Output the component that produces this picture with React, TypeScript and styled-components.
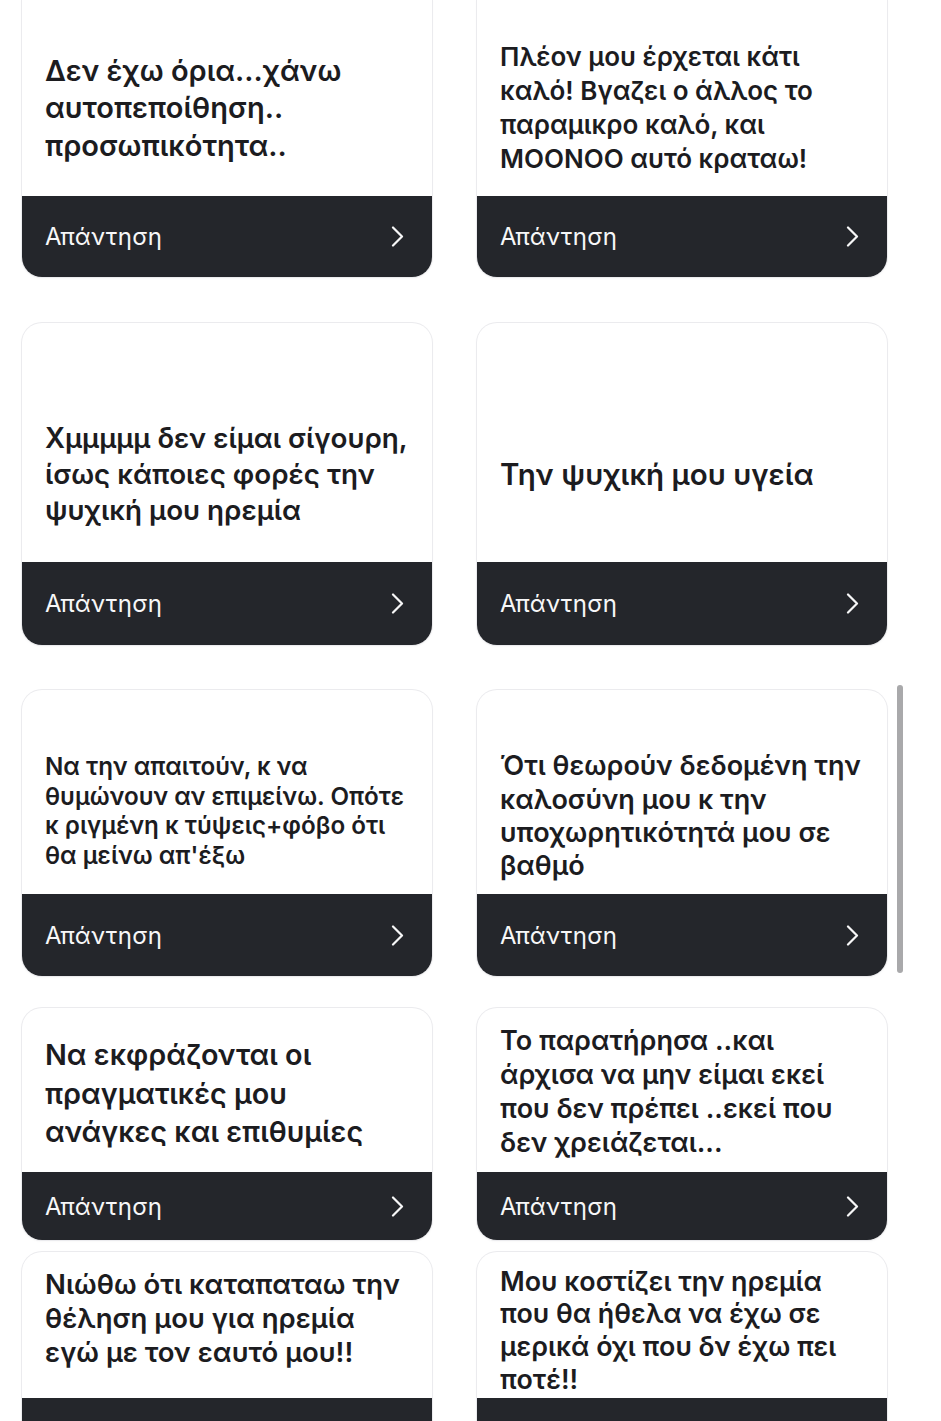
import React from 'react'
import styled, { createGlobalStyle } from 'styled-components'

const GlobalStyle = createGlobalStyle`
  html, body {
    margin: 0;
    padding: 0;
    background: #ffffff;
  }
  body {
    font-family: Inter, "Noto Sans", "Liberation Sans", sans-serif;
    -webkit-font-smoothing: antialiased;
  }
`

const Page = styled.div`
  position: relative;
  height: 1421px;
  overflow: hidden;
  padding: 0 54px 0 22px;
  display: flex;
  flex-direction: column;
`

const Row = styled.div<{ $space: number }>`
  display: grid;
  grid-template-columns: 410px 410px;
  column-gap: 45px;
  margin-bottom: ${(p) => p.$space}px;
`

const Card = styled.div<{ $cutTop?: boolean }>`
  display: flex;
  flex-direction: column;
  background: #ffffff;
  border-radius: ${(p) => (p.$cutTop ? '0 0 20px 20px' : '20px')};
  overflow: hidden;
  box-shadow: 0 0 0 1px #ebebee, 0 1px 3px rgba(0, 0, 0, 0.05);
`

const Body = styled.div<{ $height: number; $padTop: number; $padBottom: number }>`
  box-sizing: border-box;
  height: ${(p) => p.$height}px;
  padding: ${(p) => p.$padTop}px 12px ${(p) => p.$padBottom}px 23px;
  display: flex;
  flex-direction: column;
  justify-content: center;
`

const Text = styled.p<{ $size: number; $line: number }>`
  margin: 0;
  font-size: ${(p) => p.$size}px;
  line-height: ${(p) => p.$line}px;
  font-weight: 600;
  color: #1c1c1f;
  white-space: nowrap;
`

const Footer = styled.div<{ $height: number }>`
  box-sizing: border-box;
  height: ${(p) => p.$height}px;
  flex-shrink: 0;
  background: #24262b;
  display: flex;
  align-items: center;
  justify-content: space-between;
  padding: 0 28px 0 23px;
  color: #f7f7f8;
`

const FooterLabel = styled.span`
  font-size: 24px;
  font-weight: 400;
  letter-spacing: 0.3px;
`

const Chevron = styled.svg`
  width: 13px;
  height: 21px;
  display: block;
`

const Scrollbar = styled.div`
  position: absolute;
  top: 685px;
  left: 897px;
  width: 6px;
  height: 288px;
  border-radius: 3px;
  background: #a9a9ab;
`

type CardData = {
  lines: string[]
  size: number
  line: number
  padTop?: number
  padBottom?: number
}

type RowData = {
  body: number
  padTop: number
  footer: number
  space: number
  cutTop?: boolean
  cards: [CardData, CardData]
}

const rows: RowData[] = [
  {
    body: 196,
    padTop: 20,
    footer: 81,
    space: 46,
    cutTop: true,
    cards: [
      { lines: ['Δεν έχω όρια...χάνω', 'αυτοπεποίθηση..', 'προσωπικότητα..'], size: 29, line: 37.5 },
      {
        lines: ['Πλέον μου έρχεται κάτι', 'καλό! Βγαζει ο άλλος το', 'παραμικρο καλό, και', 'ΜΟΟΝΟΟ αυτό κραταω!'],
        size: 26,
        line: 34,
      },
    ],
  },
  {
    body: 239,
    padTop: 62,
    footer: 83,
    space: 45,
    cards: [
      { lines: ['Χμμμμμ δεν είμαι σίγουρη,', 'ίσως κάποιες φορές την', 'ψυχική μου ηρεμία'], size: 27.8, line: 36 },
      { lines: ['Την ψυχική μου υγεία'], size: 29.5, line: 36 },
    ],
  },
  {
    body: 204,
    padTop: 38,
    footer: 82,
    space: 32,
    cards: [
      {
        lines: ['Να την απαιτούν, κ να', 'θυμώνουν αν επιμείνω. Οπότε', 'κ ριγμένη κ τύψεις+φόβο ότι', 'θα μείνω απ\'έξω'],
        size: 24.2,
        line: 29.5,
      },
      {
        lines: ['Ότι θεωρούν δεδομένη την', 'καλοσύνη μου κ την', 'υποχωρητικότητά μου σε', 'βαθμό'],
        size: 27,
        line: 33.3,
        padTop: 48,
      },
    ],
  },
  {
    body: 164,
    padTop: 0,
    footer: 68,
    space: 12,
    cards: [
      { lines: ['Να εκφράζονται οι', 'πραγματικές μου', 'ανάγκες και επιθυμίες'], size: 28.8, line: 38.5, padTop: 8 },
      {
        lines: ['Το παρατήρησα  ..και', 'άρχισα να μην είμαι εκεί', 'που δεν πρέπει ..εκεί που', 'δεν χρειάζεται...'],
        size: 27,
        line: 34,
        padTop: 3,
      },
    ],
  },
  {
    body: 146,
    padTop: 0,
    footer: 80,
    space: 0,
    cards: [
      { lines: ['Νιώθω ότι καταπαταω την', 'θέληση μου για ηρεμία', 'εγώ με τον εαυτό μου!!'], size: 27.5, line: 34, padBottom: 14 },
      {
        lines: ['Μου κοστίζει την ηρεμία', 'που θα ήθελα να έχω σε', 'μερικά όχι που δν έχω πει', 'ποτέ!!'],
        size: 26.8,
        line: 32.7,
        padTop: 10,
      },
    ],
  },
]

const ChevronIcon: React.FC = () => (
  <Chevron viewBox="0 0 13 21" fill="none">
    <polyline points="2,1.5 11,10.5 2,19.5" stroke="#f7f7f8" strokeWidth="2.2" strokeLinecap="round" strokeLinejoin="round" />
  </Chevron>
)

const AnswerCard: React.FC<{ data: CardData; row: RowData }> = ({ data, row }) => (
  <Card $cutTop={row.cutTop}>
    <Body $height={row.body} $padTop={data.padTop ?? row.padTop} $padBottom={data.padBottom ?? 0}>
      <Text $size={data.size} $line={data.line}>
        {data.lines.map((l, i) => (
          <React.Fragment key={i}>
            {l}
            {i < data.lines.length - 1 && <br />}
          </React.Fragment>
        ))}
      </Text>
    </Body>
    <Footer $height={row.footer}>
      <FooterLabel>Απάντηση</FooterLabel>
      <ChevronIcon />
    </Footer>
  </Card>
)

const App: React.FC = () => {
  return (
    <>
      <GlobalStyle />
      <Page>
        {rows.map((row, i) => (
          <Row key={i} $space={row.space}>
            {row.cards.map((c, j) => (
              <AnswerCard key={j} data={c} row={row} />
            ))}
          </Row>
        ))}
        <Scrollbar />
      </Page>
    </>
  )
}

export default App
